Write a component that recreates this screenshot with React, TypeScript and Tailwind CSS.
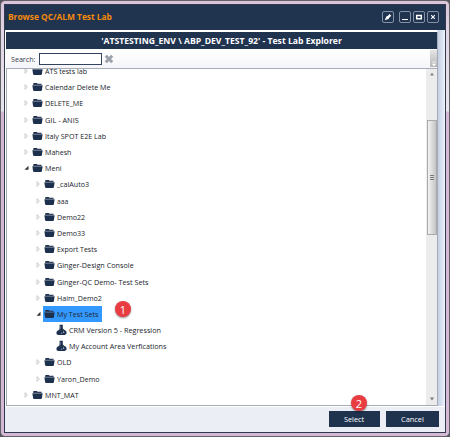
import React from "react";

type Kind = "closed" | "open" | "leaf";
type Row = { label: string; level: 0 | 1 | 2; kind: Kind; selected?: boolean; fit?: string };

const rows: Row[] = [
  { label: "ATS tests lab", level: 0, kind: "closed" },
  { label: "Calendar Delete Me", level: 0, kind: "closed" },
  { label: "DELETE_ME", level: 0, kind: "closed" },
  { label: "GIL - ANIS", level: 0, kind: "closed", fit: "scale-x-[.92]" },
  { label: "Italy SPOT E2E Lab", level: 0, kind: "closed" },
  { label: "Mahesh", level: 0, kind: "closed" },
  { label: "Meni", level: 0, kind: "open" },
  { label: "_calAuto3", level: 1, kind: "closed" },
  { label: "aaa", level: 1, kind: "closed", fit: "scale-x-[.84]" },
  { label: "Demo22", level: 1, kind: "closed" },
  { label: "Demo33", level: 1, kind: "closed" },
  { label: "Export Tests", level: 1, kind: "closed", fit: "scale-x-[.87]" },
  { label: "Ginger-Design Console", level: 1, kind: "closed", fit: "scale-x-[.905]" },
  { label: "Ginger-QC Demo- Test Sets", level: 1, kind: "closed", fit: "scale-x-[.905]" },
  { label: "Haim_Demo2", level: 1, kind: "closed" },
  { label: "My Test Sets", level: 1, kind: "open", selected: true },
  { label: "CRM Version 5 - Regression", level: 2, kind: "leaf", fit: "scale-x-[.905]" },
  { label: "My Account Area Verfications", level: 2, kind: "leaf", fit: "scale-x-[.895]" },
  { label: "OLD", level: 1, kind: "closed" },
  { label: "Yaron_Demo", level: 1, kind: "closed" },
  { label: "MNT_MAT", level: 0, kind: "closed" },
];

const indent = { 0: "pl-[15.500px]", 1: "pl-[27.500px]", 2: "pl-[39.500px]" };

function Folder() {
  return (
    <svg className="h-[10px] w-[11px] shrink-0" viewBox="0 0 11 10">
      <path d="M1.200 3V1.600L1.900 1h2.800l.8.8h4V3z" fill="#1b2c49" />
      <path d="M.4 3.300h10.200L9.900 8.300 9.200 9H1.800L1.100 8.300z" fill="#1d304e" />
      <path d="M1.200 3h8.600" stroke="#8793a8" strokeWidth=".5" />
    </svg>
  );
}

function Flask() {
  return (
    <svg className="h-[12px] w-[11px] shrink-0" viewBox="0 0 11 12">
      <path d="M3.600.8h3.200v3.400L8 5.800c1.700.6 2.600 1.700 2.600 3 0 1.400-1 2.100-2.300 2.100H2.700C1.200 10.900.4 10.100.4 8.900c0-1.400.9-2.500 2.300-3L3.600 4.200z" fill="#1d304e" />
      <path d="M4.400 2v2.500L3 6.500" stroke="#8c99ad" strokeWidth=".6" fill="none" />
      <path d="M6.700 6.700l1.800 1.800-1 .5zM4.700 9.500l1-1 .8.800" fill="#e3e8ef" />
    </svg>
  );
}

function Arrow({ kind }: { kind: Kind }) {
  return (
    <svg className="h-[8px] w-[6px] shrink-0" viewBox="0 0 6 8">
      {kind === "closed" && <path d="M2 1.700v4.600L4.500 4z" fill="#fff" stroke="#b5b5b5" strokeWidth=".7" />}
      {kind === "open" && <path d="M5.500 1.800v4h-4z" fill="#30343b" />}
    </svg>
  );
}

function TreeRow({ row }: { row: Row }) {
  return (
    <div className={`flex h-[16.200px] items-center ${indent[row.level]}`}>
      <Arrow kind={row.kind} />
      <div className={`ml-[2.500px] flex h-full items-center pl-[1px] ${row.selected ? "w-[59px] bg-[#3399ff]" : ""}`}>
        {row.kind === "leaf" ? <Flask /> : <Folder />}
        <span className={`ml-[2px] origin-left whitespace-pre text-[8px] leading-[16px] text-[#20242b] ${row.fit ?? "scale-x-[.89]"}`}>{row.label}</span>
      </div>
    </div>
  );
}

function Badge({ n, place }: { n: string; place: string }) {
  return (
    <div className={`absolute flex size-[16px] items-center justify-center rounded-full bg-[#e93d42] text-[11px] leading-none text-white shadow-[0_1px_2px_rgba(0,0,0,0.45)] ${place}`}>
      {n}
    </div>
  );
}

function WindowButtons() {
  const box = "flex h-[12px] w-[12px] items-center justify-center rounded-[2px] border border-[#8391a6]";
  return (
    <div className="flex">
      <div className={`${box} mr-[5px]`}>
        <svg className="size-[10px]" viewBox="0 0 10 10"><path d="M1.800 8.200l1.500-3.700L5 3.700 6.300 2l2 1.700L6.500 5.400 5.500 7z" fill="#fff" /></svg>
      </div>
      <div className={`${box} mr-[2px]`}>
        <svg className="size-[10px]" viewBox="0 0 10 10"><path d="M2 7.500h6" stroke="#fff" /></svg>
      </div>
      <div className={`${box} mr-[2px]`}>
        <svg className="size-[10px]" viewBox="0 0 10 10"><path d="M2.700 3.500h4.600v3.200H2.700z" fill="none" stroke="#fff" strokeWidth="1.500" /></svg>
      </div>
      <div className={box}>
        <svg className="size-[10px]" viewBox="0 0 10 10"><path d="M3.200 3.200l3.600 3.600M6.800 3.200L3.200 6.800" stroke="#fff" strokeWidth="1.100" /></svg>
      </div>
    </div>
  );
}

export default function App() {
  return (
    <div className="relative h-[437px] w-[450px] overflow-hidden bg-[#55565c] font-['Open_Sans','Noto_Sans',sans-serif]">
      <div className="flex h-full w-full flex-col rounded-[5px] border border-[#626168] bg-[linear-gradient(#d9c3d8_0,#e2d5e4_30px,#e8e5ec_110px,#d5b9d4_111px,#d5b9d4_100%)] p-[3px]">
        <div className="flex min-h-0 flex-1 flex-col border border-[#30394e] bg-[#ebeff5]">
          <header className="flex h-[25px] shrink-0 items-center justify-between bg-[#20334f] pr-[6px] pb-px pl-[3px]">
            <h1 className="origin-left scale-x-[.93] whitespace-nowrap text-[9px] font-bold text-[#f58a0b]">Browse QC/ALM Test Lab</h1>
            <WindowButtons />
          </header>
          <div className="flex h-[376px] shrink-0 bg-[linear-gradient(90deg,#fff_0,#fff_432px,#c7d1e3_433px,#d8e1f0_437px,#f1f5fb_440px)] pt-[2px] pl-px">
            <main className="flex w-[432px] flex-col border-r border-[#a4abb8]">
              <h2 className="mb-px flex h-[17px] shrink-0 items-center justify-center bg-[#20334f] text-[9px] font-bold text-white">
                <span className="scale-x-[.958] whitespace-nowrap">'ATSTESTING_ENV \ ABP_DEV_TEST_92' - Test Lab Explorer</span>
              </h2>
              <div className="flex h-[18px] shrink-0 items-center bg-linear-to-b from-white to-[#f5f5fa] pb-px pl-[5px]">
                <label className="w-[27.500px] shrink-0 origin-left scale-x-[.89] whitespace-nowrap text-[8px] text-[#353c49]">Search:</label>
                <div className="h-[12px] w-[63px] border border-[#34445e] bg-white" />
                <svg className="ml-[2px] size-[10px]" viewBox="0 0 10 10"><path d="M1.800 1.800l6.400 6.400M8.200 1.800L1.800 8.200" stroke="#9ba1ab" strokeWidth="3" /></svg>
                <div className="ml-auto flex h-full w-[7px] items-end justify-center bg-linear-to-b from-[#e5e5e5] to-[#b5b5b5]">
                  <svg className="size-[6px]" viewBox="0 0 6 6"><path d="M1 1h4M1.500 3h3L3 5z" fill="#fff" stroke="#fff" strokeWidth=".7" /></svg>
                </div>
              </div>
              <div className="flex min-h-0 flex-1 border-y border-l border-[#a7adb7] bg-white">
                <div className="min-w-0 flex-1 overflow-hidden">
                  <div className="-mt-[6px]">{rows.map((row) => <TreeRow key={row.label} row={row} />)}</div>
                </div>
                <div className="flex w-[11px] flex-col items-center bg-[#ececec]">
                  <svg className="mt-[2px] h-[6px] w-[6px]" viewBox="0 0 6 6"><path d="M1 4.500L3 1.500l2 3z" fill="#888" /></svg>
                  <div className="mt-[43px] flex h-[115px] w-[10px] flex-col items-center justify-center gap-px border border-[#aaa] bg-linear-to-r from-[#f3f3f3] to-[#c4c4c4]">
                    <i className="h-px w-[4px] bg-[#777]" /><i className="h-px w-[4px] bg-[#777]" /><i className="h-px w-[4px] bg-[#777]" />
                  </div>
                  <svg className="mt-auto mb-[3px] h-[6px] w-[6px]" viewBox="0 0 6 6"><path d="M1 1.500L3 4.500l2-3z" fill="#777" /></svg>
                </div>
              </div>
            </main>
          </div>
          <footer className="flex flex-1 items-start justify-end border-t border-white bg-[#ebeff5] pt-[4px] pr-[6px] text-[8px] text-white">
            <button className="mr-[6px] h-[16px] w-[51px] bg-[#1f334f]"><span className="inline-block scale-x-[.92]">Select</span></button>
            <button className="h-[16px] w-[53px] bg-[#1f334f]"><span className="inline-block scale-x-[.92]">Cancel</span></button>
          </footer>
        </div>
      </div>
      <Badge n="1" place="left-[115px] top-[301px]" />
      <Badge n="2" place="left-[351px] top-[395px]" />
    </div>
  );
}
